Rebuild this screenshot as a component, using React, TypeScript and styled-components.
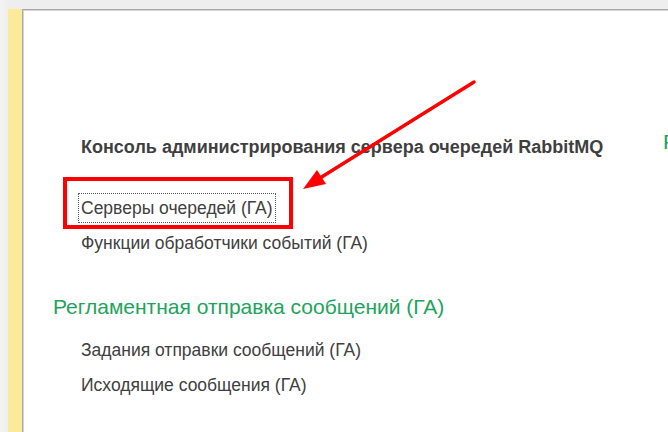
import React from "react";
import styled, { createGlobalStyle } from "styled-components";

const Global = createGlobalStyle`
  html, body {
    margin: 0;
    padding: 0;
    background: #f0f0f0;
    overflow: hidden;
  }
  body {
    font-family: "Liberation Sans", Arial, sans-serif;
  }
`;

const Page = styled.div`
  position: relative;
  width: 668px;
  height: 432px;
  box-sizing: border-box;
  padding: 9px 0 0 8px;
  background: linear-gradient(to right, #f4f4f4 0, #eeeeee 8px);
  overflow: hidden;
`;

const Frame = styled.div`
  display: flex;
  height: 100%;
`;

const SideStrip = styled.div`
  width: 14px;
  flex: none;
  background: #fcea9b;
`;

const Workspace = styled.div`
  flex: 1;
  display: flex;
  background: #ffffff;
  border-left: 1px solid #a8a8a8;
  border-top: 1px solid #a8a8a8;
  box-shadow: inset 1px 1px 0 #d4d4d4;
  padding-left: 1px;
  padding-top: 1px;
  overflow: hidden;
`;

const Column = styled.div<{ $width?: number; $top: number }>`
  flex: none;
  width: ${(p) => (p.$width ? `${p.$width}px` : "auto")};
  padding-top: ${(p) => p.$top}px;
  display: flex;
  flex-direction: column;
  white-space: nowrap;
`;

const GroupTitle = styled.div`
  margin-left: 57px;
  font-size: 18px;
  font-weight: bold;
  line-height: 20px;
  color: #3f3f3f;
`;

const GroupHeading = styled.div<{ $gap: number }>`
  margin-top: ${(p) => p.$gap}px;
  margin-left: 29px;
  font-size: 21px;
  line-height: 24px;
  color: #20a45a;
`;

const ItemList = styled.div<{ $gap: number }>`
  margin-top: ${(p) => p.$gap}px;
  margin-left: 54px;
  display: flex;
  flex-direction: column;
  align-items: flex-start;
  gap: 5px;
`;

const Item = styled.div<{ $focused?: boolean }>`
  height: 30px;
  box-sizing: border-box;
  display: flex;
  align-items: center;
  padding: 0 2px;
  border: 1px dotted ${(p) => (p.$focused ? "#5a5a5a" : "transparent")};
  font-size: 17.5px;
  color: #404040;
`;

const Callout = styled.svg`
  position: absolute;
  left: 0;
  top: 0;
  pointer-events: none;
`;

export default function App() {
  return (
    <>
      <Global />
      <Page>
        <Frame>
          <SideStrip />
          <Workspace>
            <Column $width={610} $top={126}>
              <GroupTitle>Консоль администрирования сервера очередей RabbitMQ</GroupTitle>
              <ItemList $gap={36}>
                <Item $focused>Серверы очередей (ГА)</Item>
                <Item>Функции обработчики событий (ГА)</Item>
              </ItemList>
              <GroupHeading $gap={37}>Регламентная отправка сообщений (ГА)</GroupHeading>
              <ItemList $gap={16}>
                <Item>Задания отправки сообщений (ГА)</Item>
                <Item>Исходящие сообщения (ГА)</Item>
              </ItemList>
            </Column>
            <Column $top={119}>
              <GroupHeading $gap={0}>Регламентные задания</GroupHeading>
            </Column>
          </Workspace>
        </Frame>
        <Callout width="668" height="432" viewBox="0 0 668 432">
          <rect x="65" y="179" width="226" height="48" fill="none" stroke="#ff0000" strokeWidth="4" />
          <line x1="474" y1="82" x2="320" y2="178" stroke="#ff0000" strokeWidth="3.5" strokeLinecap="round" />
          <polygon points="303,189 326,184 317,170" fill="#ff0000" />
        </Callout>
      </Page>
    </>
  );
}
